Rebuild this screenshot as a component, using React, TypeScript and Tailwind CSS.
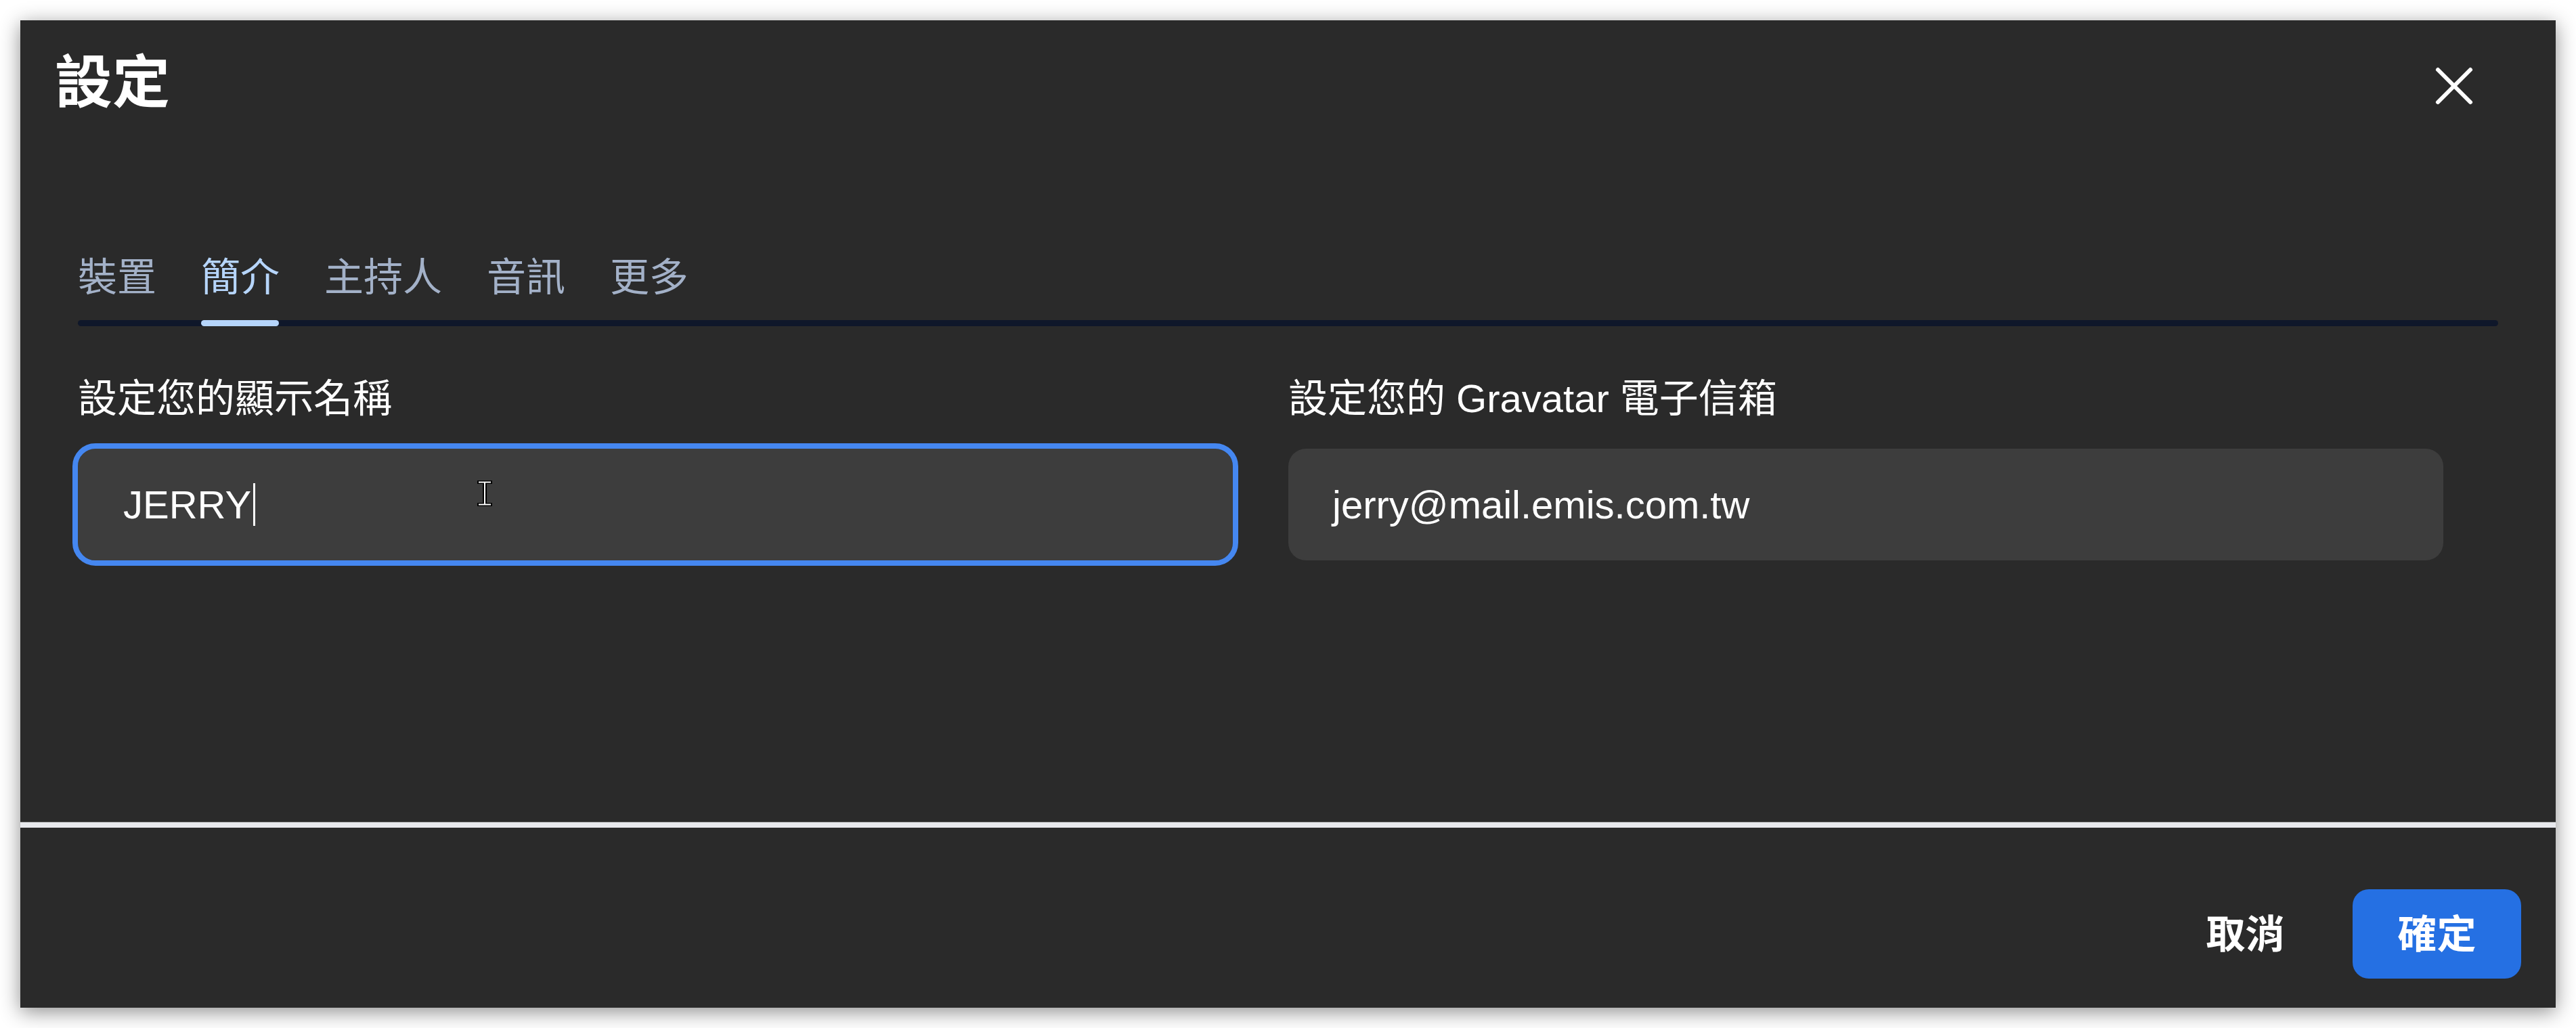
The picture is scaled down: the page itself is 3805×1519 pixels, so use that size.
import { X } from "lucide-react";

const tabs = ["裝置", "簡介", "主持人", "音訊", "更多"];

function Field({ label, value, focused }: { label: string; value: string; focused?: boolean }) {
  return (
    <div className="flex flex-col">
      <div className="text-[58px] leading-none text-white mt-[78px]">{label}</div>
      <div
        className={
          "relative mt-[45px] h-[165px] w-[1706px] rounded-[26px] bg-[#3d3d3d] flex items-center text-[58px] text-white " +
          (focused ? "pl-[67px] outline-[8px] outline-solid outline-[#4587f0]" : "pl-[65px]")
        }
      >
        <span>{value}</span>
        {focused && <span className="ml-[3px] w-[3px] h-[63px] bg-white" />}
        {focused && (
          <svg className="absolute left-[588px] top-[45px]" width="26" height="42" viewBox="0 0 26 42">
            <path d="M2 2h22v5h-8v28h8v5H2v-5h8V7H2z" fill="#000" />
            <path d="M4 3.5h18v2h-8v31h8v2H4v-2h8v-31H4z" fill="#fff" />
          </svg>
        )}
      </div>
    </div>
  );
}

export default function App() {
  return (
    <div className="w-full h-[1519px] bg-white p-[30px] font-['Liberation_Sans','Noto_Sans_CJK_TC',sans-serif]">
      <div className="w-[3745px] h-[1459px] bg-[#2a2a2a] flex flex-col shadow-[0_6px_28px_rgba(0,0,0,0.45)]">
        {/* header */}
        <div className="h-[194px] flex items-center justify-between pl-[51px] pr-[102px]">
          <h1 className="mb-[10px] text-[85px] leading-none font-bold text-white">設定</h1>
          <X size={96} strokeWidth={1.5} className="text-white" />
        </div>

        {/* body */}
        <div className="flex-1 px-[85px] pt-[157px]">
          <div className="flex gap-[66px] text-[58px] leading-none">
            {tabs.map((t, i) => (
              <div key={t} className={i === 1 ? "text-[#b6d5fb]" : "text-[#a3b1c8]"}>
                {t}
              </div>
            ))}
          </div>
          <div className="relative mt-[34px] h-[9px] rounded-full bg-[#0f172a]">
            <div className="absolute left-[182px] top-0 h-[9px] w-[115px] rounded-full bg-[#b6d5fb]" />
          </div>

          <div className="grid grid-cols-2 gap-[82px] w-[3494px]">
            <Field label="設定您的顯示名稱" value="JERRY" focused />
            <Field label="設定您的 Gravatar 電子信箱" value="jerry@mail.emis.com.tw" />
          </div>
        </div>

        {/* footer */}
        <div className="border-t border-[#555] h-[9px] bg-[#e8e9ed]" />
        <div className="h-[266px] flex justify-end items-start gap-[34px] pt-[91px] pr-[51px]">
          <button className="w-[249px] h-[132px] rounded-[24px] text-[58px] font-bold text-white">取消</button>
          <button className="w-[249px] h-[132px] rounded-[24px] bg-[#2570e3] text-[58px] font-bold text-white">確定</button>
        </div>
      </div>
    </div>
  );
}
